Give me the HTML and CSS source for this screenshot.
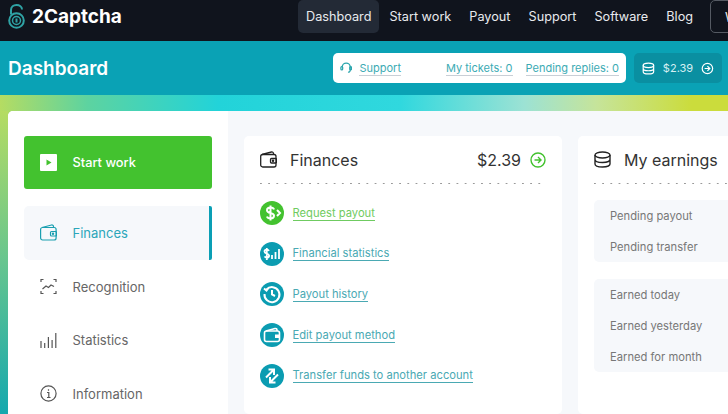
FILE: index.html
```html
<!DOCTYPE html>
<html lang="en">
<head>
    <meta charset="UTF-8">
    <title>Dashboard</title>
    <link rel="stylesheet" href="styles.css">
</head>
<body>

    <!-- Top navigation -->
    <header class="topbar">
        <a class="logo" href="#">
            <svg class="logo-icon" viewBox="0 0 17 25" width="17" height="25" fill="none" stroke="#2fa3a5">
                <path d="M3 10.500V6C3 2.800 5.500 1 8.500 1S14 2.800 14 5.500" stroke-width="2"/>
                <circle cx="8.500" cy="16.500" r="7.300" stroke-width="2"/>
                <circle cx="8.500" cy="16.500" r="4" stroke-width="1.500"/>
                <path d="M8.500 14.500v4" stroke-width="2"/>
            </svg>
            <span>2Captcha</span>
        </a>
        <nav class="nav">
            <a class="nav-link active" href="#">Dashboard</a>
            <a class="nav-link" href="#">Start work</a>
            <a class="nav-link" href="#">Payout</a>
            <a class="nav-link" href="#">Support</a>
            <a class="nav-link" href="#">Software</a>
            <a class="nav-link" href="#">Blog</a>
        </nav>
        <a class="wallet-btn" href="#">Wallet</a>
    </header>

    <!-- Title bar -->
    <div class="titlebar">
        <h1>Dashboard</h1>
        <div class="support-box">
            <svg viewBox="0 0 14 14" width="14" height="14" fill="none" stroke="#2aa5ad" stroke-width="1.400">
                <path d="M2.500 6a4.500 4.500 0 0 1 9 0M11.500 6v3.500a2 2 0 0 1-2.500 2"/>
                <rect x="1" y="5.500" width="2" height="3.500" rx="1"/>
                <rect x="11" y="5.500" width="2" height="3.500" rx="1"/>
            </svg>
            <a class="support-link first" href="#">Support</a>
            <a class="support-link" href="#">My tickets: 0</a>
            <a class="support-link" href="#">Pending replies: 0</a>
        </div>
        <div class="balance-box">
            <svg viewBox="0 0 16 16" width="15" height="15" fill="none" stroke="#fff" stroke-width="1.500">
                <ellipse cx="8" cy="4" rx="6.500" ry="2.800"/>
                <path d="M1.500 4v8c0 1.500 3 2.800 6.500 2.800s6.500-1.300 6.500-2.800V4M1.500 8c0 1.500 3 2.800 6.500 2.800S14.500 9.500 14.500 8"/>
            </svg>
            <span>$2.39</span>
            <svg viewBox="0 0 16 16" width="15" height="15" fill="none" stroke="#fff" stroke-width="1.500">
                <circle cx="8" cy="8" r="6.500"/>
                <path d="M4.500 8h6.500M8 5l3 3-3 3"/>
            </svg>
        </div>
    </div>

    <!-- Main area -->
    <div class="page">
        <div class="panel">
            <aside class="sidebar">
                <a class="start-btn" href="#">
                    <svg viewBox="0 0 17 17" width="17" height="17">
                        <path d="M1 0h15a1 1 0 0 1 1 1v15a1 1 0 0 1-1 1H1a1 1 0 0 1-1-1V1a1 1 0 0 1 1-1z" fill="#fff"/>
                        <path d="M6.500 5.500l5 3-5 3z" fill="#43c22f"/>
                    </svg>
                    <span>Start work</span>
                </a>
                <a class="side-item current" href="#">
                    <svg viewBox="0 0 17 17" width="17" height="17" fill="none" stroke="#1a9fb0" stroke-width="1.200">
                        <rect x="0.600" y="3.500" width="15.500" height="12.500" rx="2"/>
                        <path d="M2 3.500L11.500 1c1-.2 1.800.3 2 1.300v1.200"/>
                        <rect x="10.500" y="7.500" width="6" height="4.500" rx="1"/>
                        <circle cx="13" cy="9.700" r=".6"/>
                    </svg>
                    <span>Finances</span>
                </a>
                <a class="side-item" href="#">
                    <svg viewBox="0 0 17 17" width="17" height="17" fill="none" stroke="#555" stroke-width="1.200">
                        <path d="M1 4V1.500h2.500M13.500 1.500H16V4M16 13v2.500h-2.500M3.500 15.500H1V13"/>
                        <path d="M2.500 11l3.500-3 2.500 1.500L11 7l3 1.500"/>
                    </svg>
                    <span>Recognition</span>
                </a>
                <a class="side-item" href="#">
                    <svg viewBox="0 0 17 17" width="17" height="17" fill="none" stroke="#555" stroke-width="1.200">
                        <path d="M1 9v7M4.700 11v5M8.400 5v11M12.100 8v8M15.800 1v15"/>
                    </svg>
                    <span>Statistics</span>
                </a>
                <a class="side-item" href="#">
                    <svg viewBox="0 0 17 17" width="17" height="17" fill="none" stroke="#555" stroke-width="1.200">
                        <circle cx="8.500" cy="8.500" r="7.600"/>
                        <path d="M7 7.500h1.800V12.500M7 12.500h3.500M8.500 4.300v1.400"/>
                    </svg>
                    <span>Information</span>
                </a>
            </aside>

            <div class="content">
                <section class="card finances">
                    <div class="card-head">
                        <svg viewBox="0 0 17 17" width="17" height="17" fill="none" stroke="#222" stroke-width="1.300">
                            <rect x="0.700" y="3.500" width="15.300" height="12.500" rx="2"/>
                            <path d="M2 3.500L11.500 1c1-.2 1.800.3 2 1.300v1.200"/>
                            <rect x="10.500" y="7.500" width="6" height="4.500" rx="1"/>
                            <circle cx="13" cy="9.700" r=".6"/>
                        </svg>
                        <h2>Finances</h2>
                        <span class="card-sum">$2.39</span>
                        <svg viewBox="0 0 16 16" width="16" height="16" fill="none" stroke="#43c22f" stroke-width="1.400">
                            <circle cx="8" cy="8" r="7"/>
                            <path d="M4.500 8h6.500M8 5l3 3-3 3"/>
                        </svg>
                    </div>
                    <ul class="fin-list">
                        <li>
                            <span class="round green">
                                <svg viewBox="0 0 24 24" width="24" height="24" fill="none" stroke="#fff" stroke-width="2">
                                    <path d="M14 8.500C13.500 7 12 6.500 10.500 6.500 8.500 6.500 7 7.500 7 9.200S8.500 11.500 10.500 12s3.500 1 3.500 2.800-1.500 2.700-3.500 2.700c-1.500 0-3-.5-3.500-2M10.500 4.500v15M17 9l3 3-3 3"/>
                                </svg>
                            </span>
                            <a class="fin-link green-text" href="#">Request payout</a>
                        </li>
                        <li>
                            <span class="round">
                                <svg viewBox="0 0 24 24" width="24" height="24" fill="none" stroke="#fff" stroke-width="1.800">
                                    <path d="M9 8.800c-.4-.8-1.200-1.200-2.200-1.200-1.500 0-2.300.8-2.300 1.900s.8 1.700 2.300 2.100 2.300 1 2.300 2.100-.8 1.900-2.300 1.900c-1 0-1.800-.4-2.200-1.200M6.800 6v12M12 13v4M15.500 10v7M19 7v10"/>
                                </svg>
                            </span>
                            <a class="fin-link" href="#">Financial statistics</a>
                        </li>
                        <li>
                            <span class="round">
                                <svg viewBox="0 0 24 24" width="24" height="24" fill="none" stroke="#fff" stroke-width="2">
                                    <path d="M6.500 7.500A7.500 7.500 0 1 1 4.500 12M4 6.500l2.500 2 2-2.500M12 8v4.500l3 1.500"/>
                                </svg>
                            </span>
                            <a class="fin-link" href="#">Payout history</a>
                        </li>
                        <li>
                            <span class="round">
                                <svg viewBox="0 0 24 24" width="24" height="24" fill="none" stroke="#fff" stroke-width="1.600">
                                    <rect x="4.500" y="8" width="15" height="10.500" rx="2"/>
                                    <path d="M6 8l9-2.500c1-.2 2 .3 2 1.500V8"/>
                                    <rect x="15" y="11.500" width="4.500" height="3.500" fill="#fff" stroke="none"/>
                                </svg>
                            </span>
                            <a class="fin-link" href="#">Edit payout method</a>
                        </li>
                        <li>
                            <span class="round">
                                <svg viewBox="0 0 24 24" width="24" height="24" fill="none" stroke="#fff" stroke-width="2">
                                    <path d="M6 13.500L13.500 6M8.500 5.500h5.500V11M18 10.500L10.500 18M15.500 18.500H10V13"/>
                                </svg>
                            </span>
                            <a class="fin-link" href="#">Transfer funds to another account</a>
                        </li>
                    </ul>
                </section>

                <section class="card earnings">
                    <div class="card-head">
                        <svg viewBox="0 0 17 17" width="17" height="17" fill="none" stroke="#222" stroke-width="1.400">
                            <ellipse cx="8.500" cy="4" rx="7.500" ry="3"/>
                            <path d="M1 4v9c0 1.700 3.400 3 7.500 3s7.500-1.300 7.500-3V4M1 8.500c0 1.700 3.400 3 7.500 3s7.500-1.300 7.500-3"/>
                        </svg>
                        <h2>My earnings</h2>
                    </div>
                    <div class="stat-box">
                        <p>Pending payout</p>
                        <p>Pending transfer</p>
                    </div>
                    <div class="stat-box">
                        <p>Earned today</p>
                        <p>Earned yesterday</p>
                        <p>Earned for month</p>
                    </div>
                </section>
            </div>
        </div>
    </div>

</body>
</html>
```

FILE: styles.css
```css
* {
    box-sizing: border-box;
}

html, body {
    height: 100%;
}

body {
    margin: 0;
    width: 728px;
    height: 414px;
    overflow: hidden;
    font-family: "Inter", "Open Sans", sans-serif;
    color: #555;
    display: flex;
    flex-direction: column;
}

a {
    text-decoration: none;
    color: inherit;
}

/* Top navigation */
.topbar {
    height: 41px;
    flex: none;
    background-color: #10141d;
    display: flex;
    padding: 0 0 8px 8px;
    overflow: hidden;
}

.logo {
    flex: none;
    display: flex;
    align-items: center;
    gap: 7px;
    width: 290px;
    color: #fff;
    font-size: 19px;
    font-weight: 700;
}

.nav {
    flex: none;
    display: flex;
    gap: 2px;
}

.nav-link {
    display: flex;
    align-items: center;
    padding: 0 8px;
    color: #e8eaee;
    font-size: 12.700px;
    white-space: nowrap;
    border-radius: 5px;
}

.nav-link.active {
    background-color: #232a36;
}

.wallet-btn {
    flex: none;
    display: flex;
    align-items: center;
    margin-left: 9px;
    padding: 0 14px;
    color: #e8eaee;
    font-size: 13px;
    border: 1px solid #555a63;
    border-radius: 5px;
}

/* Title bar */
.titlebar {
    height: 54px;
    flex: none;
    background-color: #0aa2b5;
    display: flex;
    align-items: center;
    padding: 0 6px 0 8px;
}

.titlebar h1 {
    margin: 0 auto 0 0;
    color: #fff;
    font-size: 19px;
    font-weight: 600;
}

.support-box {
    display: flex;
    align-items: center;
    width: 293px;
    height: 30px;
    padding: 0 7px;
    background-color: #fff;
    border-radius: 5px;
    gap: 13px;
}

.support-link {
    color: #3cabb4;
    font-size: 11px;
    white-space: nowrap;
    border-bottom: 1px solid #c9cfd6;
}

.support-link.first {
    margin-right: 32px;
    margin-left: -6px;
}

.balance-box {
    display: flex;
    align-items: center;
    gap: 8px;
    width: 88px;
    height: 30px;
    margin-left: 8px;
    padding: 0 8px;
    background-color: #0a8fa1;
    border-radius: 5px;
    color: #d6f0f3;
    font-size: 11px;
}

/* Gradient area */
.page {
    flex: 1;
    padding: 16px 0 0 8px;
    min-height: 0;
    background: linear-gradient(90deg, #b5dc62 0%, #5dd3a0 12%, #22d3d9 30%, #30d8de 55%, #9ce2d4 72%, #c6e49a 82%, #cbdc3c 95%);
    position: relative;
}

.page::before {
    content: "";
    position: absolute;
    left: 0;
    top: 16px;
    bottom: 0;
    width: 8px;
    background: linear-gradient(180deg, #b5dc62 0%, #66c58f 50%, #15a8ae 100%);
}

.panel {
    display: flex;
    height: 100%;
    position: relative;
    background-color: #f6f8fb;
    border-radius: 5px 0 0 0;
    overflow: hidden;
}

/* Sidebar */
.sidebar {
    width: 220px;
    flex: none;
    background-color: #fff;
    padding: 25px 16px 0;
}

.start-btn {
    display: flex;
    align-items: center;
    gap: 15.500px;
    height: 53px;
    margin-bottom: 17px;
    padding-left: 16px;
    background-color: #43c22f;
    border-radius: 3px;
    color: #fff;
    font-size: 12.800px;
    font-weight: 500;
}

.side-item {
    display: flex;
    align-items: center;
    gap: 15.500px;
    height: 53.700px;
    padding: 0 0 0 16px;
    font-size: 13px;
    color: #666;
}

.side-item.current {
    background-color: #f6f8fb;
    border-right: 3px solid #0a9fb5;
    border-radius: 5px 2px 2px 5px;
    color: #2ba6ba;
}

/* Cards */
.content {
    flex: 1;
    display: flex;
    gap: 16px;
    padding: 25px 0 0 16px;
    min-width: 0;
}

.card {
    background-color: #fff;
    border-radius: 5px;
    padding: 0 16px;
    flex: none;
}

.finances {
    width: 318px;
}

.earnings {
    width: 300px;
}

.card-head {
    display: flex;
    align-items: center;
    height: 48px;
    padding-bottom: 1px;
    margin-bottom: 16px;
    gap: 13px;
    background-image: linear-gradient(90deg, #999 1.500px, transparent 1.500px);
    background-size: 8.200px 1.500px;
    background-repeat: repeat-x;
    background-position: left bottom;
    color: #333;
}

.card-head h2 {
    margin: 0;
    font-size: 16px;
    font-weight: 400;
    flex: 1;
}

.card-sum {
    font-size: 16px;
    font-weight: 400;
    margin-right: -4px;
}

.fin-list {
    list-style: none;
    margin: 0;
    padding: 1px 0 0;
    display: flex;
    flex-direction: column;
    gap: 16.700px;
}

.fin-list li {
    display: flex;
    align-items: center;
    gap: 8.500px;
}

.round {
    display: block;
    width: 24px;
    height: 24px;
    border-radius: 50%;
    background-color: #0b9cb1;
}

.round.green {
    background-color: #43c22f;
}

.round svg {
    display: block;
}

.fin-link {
    color: #4aa9b3;
    font-size: 11.200px;
    border-bottom: 1px solid #4aa9b3;
}

.fin-link.green-text {
    color: #6fcb61;
    border-bottom-color: #6fcb61;
}

.stat-box {
    background-color: #f6f8fb;
    border-radius: 5px;
    padding: 0 16px;
    margin-bottom: 17px;
}

.stat-box p {
    margin: 0;
    height: 31px;
    display: flex;
    align-items: center;
    font-size: 11.200px;
    color: #777;
}
```
